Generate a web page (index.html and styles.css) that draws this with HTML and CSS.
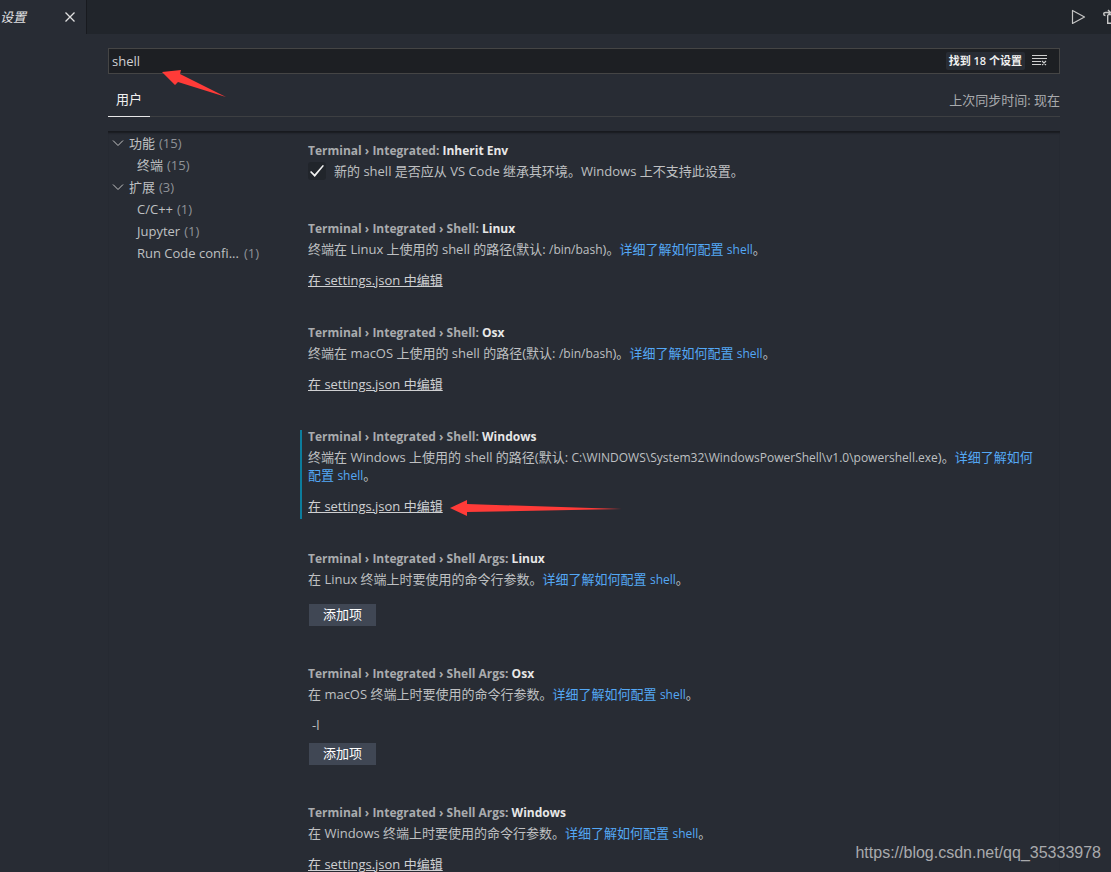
FILE: index.html
```html
<!DOCTYPE html>
<html lang="zh-CN">
<head>
<meta charset="utf-8">
<title>设置</title>
<link rel="stylesheet" href="styles.css">
</head>
<body>
<header class="tabbar">
  <div class="file-tab">
    <span class="file-name">设置</span>
    <button class="icon-btn" aria-label="关闭"><svg width="12" height="12" viewBox="0 0 12 12"><path d="M1.500 1.500l9 9M10.500 1.500l-9 9" fill="none" stroke="#e0e0e0" stroke-width="1.300"/></svg></button>
  </div>
  <div class="editor-actions">
    <button class="icon-btn" aria-label="运行"><svg width="16" height="16" viewBox="0 0 16 16"><path d="M1.500 1.500v13l12-6.500z" fill="none" stroke="#c5c5c5" stroke-width="1.200" stroke-linejoin="round"/></svg></button>
    <button class="icon-btn" aria-label="打开设置"><svg width="16" height="16" viewBox="0 0 16 16"><path d="M7 3.500H2.500Q.7 3.500 .7 5T2.500 6.500M5 1l2.500 2.500L5 6M4.700 6v8.300h8V5.500H4.700" fill="none" stroke="#c5c5c5" stroke-width="1.400"/></svg></button>
  </div>
</header>

<main class="settings">
  <div class="search">
    <input class="search-input" type="text" value="shell" aria-label="搜索设置">
    <span class="result-count">找到 18 个设置</span>
    <button class="icon-btn" aria-label="清除搜索"><svg width="16" height="16" viewBox="0 0 16 16"><path d="M0 2.500h15M0 5.500h15M0 8.500h9M0 11.500h9M10 8l4 4M14 8l-4 4" fill="none" stroke="#d0d0d0" stroke-width="1.100"/></svg></button>
  </div>
  <div class="scope">
    <button class="scope-tab">用户</button>
    <span class="sync">上次同步时间: 现在</span>
  </div>

  <div class="body">
    <nav class="toc">
      <a class="toc-row" href="#terminal"><svg class="chevron" width="12" height="12" viewBox="0 0 12 12"><path d="M1 3.500l5 5 5-5" fill="none" stroke="#c5c5c5"/></svg>功能 <span class="count">(15)</span></a>
      <a class="toc-row child" href="#terminal">终端 <span class="count">(15)</span></a>
      <a class="toc-row" href="#terminal"><svg class="chevron" width="12" height="12" viewBox="0 0 12 12"><path d="M1 3.500l5 5 5-5" fill="none" stroke="#c5c5c5"/></svg>扩展 <span class="count">(3)</span></a>
      <a class="toc-row child" href="#terminal">C/C++ <span class="count">(1)</span></a>
      <a class="toc-row child" href="#terminal">Jupyter <span class="count">(1)</span></a>
      <a class="toc-row child" href="#terminal"><span class="long-name">Run Code confi...</span> <span class="count">(1)</span></a>
    </nav>

    <div class="list" id="terminal">
      <section class="item">
        <h2 class="title">Terminal › Integrated: <b>Inherit Env</b></h2>
        <label class="check-row"><input class="check" type="checkbox" checked>新的 shell 是否应从 VS Code 继承其环境。Windows 上不支持此设置。</label>
      </section>
      <section class="item">
        <h2 class="title">Terminal › Integrated › Shell: <b>Linux</b></h2>
        <p class="desc">终端在 Linux 上使用的 shell 的路径(默认: <code>/bin/bash</code>)。<a class="link" href="#">详细了解如何配置 <code>shell</code></a>。</p>
        <a class="edit" href="#">在 settings.json 中编辑</a>
      </section>
      <section class="item">
        <h2 class="title">Terminal › Integrated › Shell: <b>Osx</b></h2>
        <p class="desc">终端在 macOS 上使用的 shell 的路径(默认: <code>/bin/bash</code>)。<a class="link" href="#">详细了解如何配置 <code>shell</code></a>。</p>
        <a class="edit" href="#">在 settings.json 中编辑</a>
      </section>
      <section class="item modified">
        <h2 class="title">Terminal › Integrated › Shell: <b>Windows</b></h2>
        <p class="desc">终端在 Windows 上使用的 shell 的路径(默认: <code>C:\WINDOWS\System32\WindowsPowerShell\v1.0\powershell.exe</code>)。<a class="link" href="#">详细了解如何配置 <code>shell</code></a>。</p>
        <a class="edit" href="#">在 settings.json 中编辑</a>
      </section>
      <section class="item">
        <h2 class="title">Terminal › Integrated › Shell Args: <b>Linux</b></h2>
        <p class="desc">在 Linux 终端上时要使用的命令行参数。<a class="link" href="#">详细了解如何配置 <code>shell</code></a>。</p>
        <button class="add">添加项</button>
      </section>
      <section class="item">
        <h2 class="title">Terminal › Integrated › Shell Args: <b>Osx</b></h2>
        <p class="desc">在 macOS 终端上时要使用的命令行参数。<a class="link" href="#">详细了解如何配置 <code>shell</code></a>。</p>
        <div class="value">-l</div>
        <button class="add">添加项</button>
      </section>
      <section class="item">
        <h2 class="title">Terminal › Integrated › Shell Args: <b>Windows</b></h2>
        <p class="desc">在 Windows 终端上时要使用的命令行参数。<a class="link" href="#">详细了解如何配置 <code>shell</code></a>。</p>
        <a class="edit" href="#">在 settings.json 中编辑</a>
      </section>
    </div>
  </div>
</main>

<svg class="arrow arrow-search" width="66" height="30" viewBox="0 0 66 30"><path d="M0 2L19 0L18 4L64 27L16 12L13 15z" fill="#ff3b38"/></svg>
<svg class="arrow arrow-edit" width="172" height="18" viewBox="0 0 172 18"><path d="M0 9L17 1V5L172 10L17 13V17z" fill="#ff3b38"/></svg>
<div class="watermark">https://blog.csdn.net/qq_35333978</div>
</body>
</html>
```
FILE: styles.css
```css
* { box-sizing: border-box; }
body {
  margin: 0;
  height: 100vh;
  overflow: hidden;
  display: flex;
  flex-direction: column;
  background: #282c34;
  color: #bfc0c2;
  font: 13px/18px "Open Sans", "Noto Sans CJK SC", sans-serif;
}
button, input { font: inherit; color: inherit; }
button { border: 0; padding: 0; background: none; }
a { color: inherit; text-decoration: none; }
code { font-family: inherit; font-size: 12px; line-height: 1; }
svg { display: block; }

.tabbar {
  display: flex;
  flex: none;
  justify-content: space-between;
  height: 34px;
  background: #21252b;
}
.file-tab {
  display: flex;
  align-items: center;
  gap: 38px;
  padding-right: 10px;
  background: #282c34;
  border-right: 1px solid #181a1f;
}
.file-name { color: #e0e1e3; font-style: italic; }
.editor-actions {
  display: flex;
  align-items: center;
  gap: 16px;
  margin-right: -8px;
}

.settings {
  flex: 1;
  min-height: 0;
  display: flex;
  flex-direction: column;
  padding: 14px 51px 0 108px;
}
.search {
  display: flex;
  flex: none;
  align-items: center;
  height: 26px;
  padding-right: 11px;
  background: #1d1f23;
  border: 1px solid #454545;
}
.search-input {
  flex: 1;
  min-width: 0;
  padding: 0 3px;
  border: 0;
  outline: 0;
  background: none;
  color: #d0d1d3;
}
.result-count {
  margin-right: 7px;
  padding: 0 3px;
  border-radius: 2px;
  background: #282c34;
  color: #f0f0f0;
  font-size: 11px;
  font-weight: 600;
}
.scope {
  display: flex;
  flex: none;
  justify-content: space-between;
  align-items: stretch;
  height: 33px;
  margin-top: 10px;
  border-bottom: 1px solid #3d3f42;
}
.scope-tab {
  margin-bottom: -1px;
  padding: 0 8px 2px;
  border-bottom: 1px solid #e7e7e7;
  color: #f0f0f0;
}
.sync { align-self: center; padding-bottom: 1px; color: #a8aaad; }

.body {
  flex: 1;
  min-height: 0;
  display: flex;
  margin-top: 14px;
  overflow: hidden;
  box-shadow: inset 0 3px 2px -1px #181a1f;
}
.toc { width: 192px; flex: none; padding-top: 1px; }
.toc-row {
  display: flex;
  align-items: center;
  gap: 4px;
  height: 22px;
  padding-left: 4px;
}
.toc-row.child { padding-left: 29px; }
.chevron { margin-right: 1px; }
.count { color: #8f9297; }
.long-name { min-width: 103px; white-space: nowrap; }

.list { flex: 1; min-width: 0; padding-top: 10px; }
.item {
  display: flex;
  flex-direction: column;
  align-items: flex-start;
  margin-bottom: 34px;
  padding: 0 20px 0 8px;
}
.title { margin: 0 0 1px; color: #a9abae; font-size: 12px; font-weight: 700; line-height: 20px; }
.title b { color: #e7e7e7; font-weight: 700; }
.desc { margin: 0 0 13px; }
.link { color: #54a8f5; }
.edit { color: #cfd0d2; text-decoration: underline; }
.modified { position: relative; }
.modified::before {
  content: "";
  position: absolute;
  left: 0;
  top: 3px;
  bottom: -4px;
  width: 2px;
  background: #0c7d9d;
}
.check-row { display: flex; align-items: center; gap: 8px; margin-bottom: 5px; }
.check {
  appearance: none;
  width: 18px;
  height: 18px;
  margin: 0;
  display: grid;
  place-items: center;
  border-radius: 3px;
  background: #21252b;
}
.check:checked::before {
  content: "";
  width: 14px;
  height: 12px;
  background: #f0f0f0;
  clip-path: polygon(0 58%, 8% 49%, 33% 78%, 91% 0, 100% 7%, 34% 100%);
}
.add {
  height: 22px;
  margin: 3px 0 4px 1px;
  padding: 0 14px 2px;
  background: #404754;
  color: #fff;
}
.value { margin: 0 0 6px; padding: 0 4px; }

.arrow { position: absolute; }
.arrow-search { left: 162px; top: 70px; }
.arrow-edit { left: 450px; top: 499px; }
.watermark {
  position: absolute;
  right: 10px;
  bottom: 8px;
  color: #a8aaad;
  font: 16px/22px "Liberation Sans", Arial, sans-serif;
}
```
